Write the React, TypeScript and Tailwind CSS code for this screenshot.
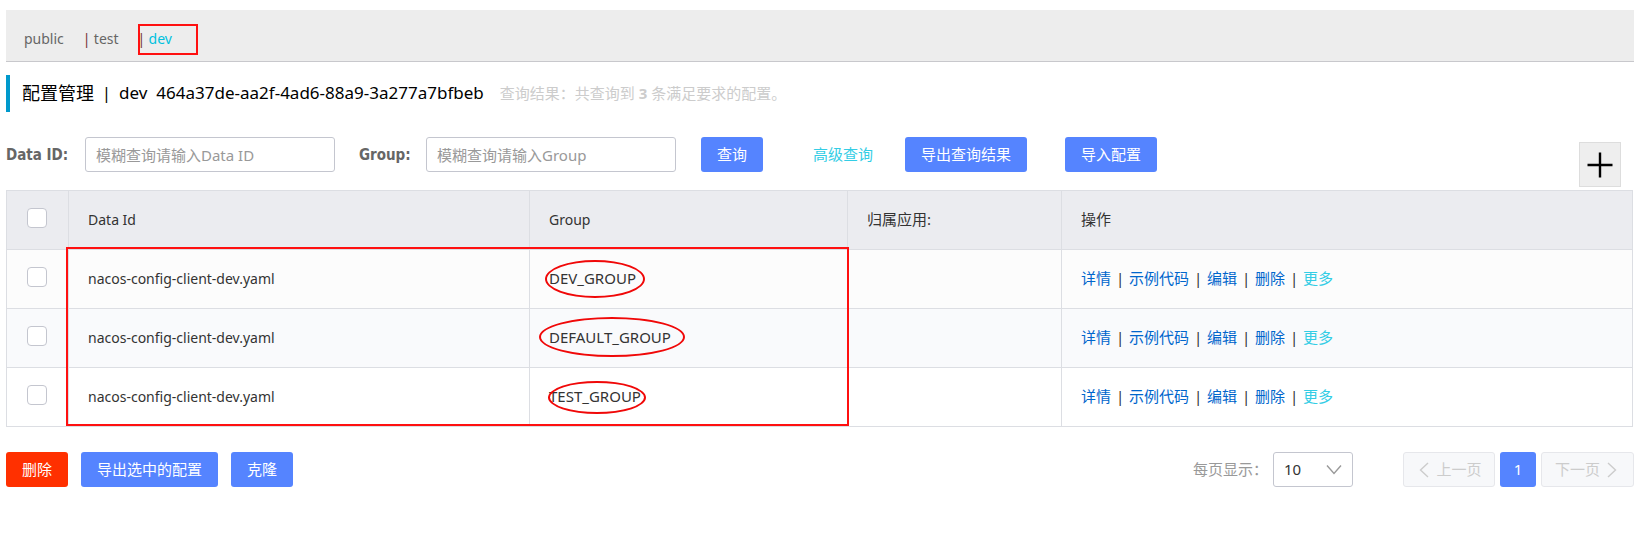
import { ReactNode } from "react";

const namespaces = ["public", "test", "dev"];

const rows = [
  { id: "nacos-config-client-dev.yaml", group: "DEV_GROUP", mark: "-left-1 -top-2 w-[100px] h-[38px]" },
  { id: "nacos-config-client-dev.yaml", group: "DEFAULT_GROUP", mark: "-left-[10px] -top-[10px] w-[146px] h-[40px]" },
  { id: "nacos-config-client-dev.yaml", group: "TEST_GROUP", mark: "-left-px -top-[5px] w-[98px] h-[33px]" },
];

const rowColors = ["bg-[#fcfcfc]", "bg-[#f9fafc]", "bg-white"];

const columns = [
  { name: "Data Id", size: "text-[14px]" },
  { name: "Group", size: "text-[14px]" },
  { name: "归属应用:", size: "pb-0.5 text-[15px]" },
  { name: "操作", size: "pb-0.5 text-[15px]" },
];

function Button({ children, danger = false }: { children: ReactNode; danger?: boolean }) {
  return (
    <button
      type="button"
      className={`h-[35px] shrink-0 rounded-[3px] px-4 pb-0.5 text-white ${danger ? "bg-[#ff3000]" : "bg-[#5584ff]"}`}
    >
      {children}
    </button>
  );
}

function Check({ label }: { label: string }) {
  return (
    <input
      type="checkbox"
      aria-label={label}
      className="mb-1 block size-5 appearance-none rounded-[4px] border border-[#c4c6cf] bg-white checked:bg-[#5584ff]"
    />
  );
}

function Chevron({ d, className }: { d: string; className: string }) {
  return (
    <svg viewBox="0 0 16 16" className={className} fill="none" stroke="currentColor" strokeWidth="1.4" aria-hidden="true">
      <path d={d} />
    </svg>
  );
}

function Actions() {
  return (
    <div className="flex whitespace-pre">
      {["详情", "示例代码", "编辑", "删除"].map((name) => (
        <span key={name} className="flex">
          <a href="#" className="text-[#0066cc]">{name}</a>
          <span className="w-[18px] text-center">|</span>
        </span>
      ))}
      <a href="#" className="text-[#33cde5]">更多</a>
    </div>
  );
}

export default function App() {
  return (
    <main className="bg-white pt-[10px] pr-[7px] pl-[6px] font-['Noto_Sans','Noto_Sans_CJK_SC',sans-serif] text-[15px] leading-5 text-[#333]">
      <nav className="flex h-[52px] items-center border-b border-[#c8c8cc] bg-[#ededed] pt-1.5 pl-[18px] text-[14px] text-[#666]">
        {namespaces.map((name, i) => (
          <span key={name} className="flex">
            {i > 0 && <span className="w-[11px] text-[#733]">|</span>}
            <span className="relative">
              <a href="#" className={name === "dev" ? "text-[#00c1de]" : "mr-[19px]"}>{name}</a>
              {name === "dev" && (
                <span className="pointer-events-none absolute -top-[5px] -left-[11px] h-[31px] w-[60px] border-2 border-[#ff1010]" />
              )}
            </span>
          </span>
        ))}
      </nav>

      <header className="mt-[13px] flex h-[37px] items-center border-l-4 border-[#0099cc] pb-0.5 pl-3">
        <h1 className="flex text-[17px] leading-6 text-black">
          <span className="text-[18px]">配置管理</span>
          <span className="w-[25px] text-center">|</span>
          <span className="mr-[9px]">dev</span>
          <span>464a37de-aa2f-4ad6-88a9-3a277a7bfbeb</span>
        </h1>
        <p className="ml-4 text-[#ccc]">
          查询结果：共查询到 <strong>3</strong> 条满足要求的配置。
        </p>
      </header>

      <form className="mt-[25px] flex h-[53px] items-start" onSubmit={(e) => e.preventDefault()}>
        <label htmlFor="data-id" className="w-[79px] shrink-0 font-['DejaVu_Sans_Condensed','DejaVu_Sans',sans-serif] leading-[37px] font-bold text-[#666]">Data ID:</label>
        <input
          id="data-id"
          placeholder="模糊查询请输入Data ID"
          className="h-[35px] w-[250px] rounded-[3px] border border-[#c4c6cf] px-[10px] placeholder:text-[#999]"
        />
        <label htmlFor="group" className="ml-6 w-[67px] shrink-0 font-['DejaVu_Sans_Condensed','DejaVu_Sans',sans-serif] leading-[37px] font-bold text-[#666]">Group:</label>
        <input
          id="group"
          placeholder="模糊查询请输入Group"
          className="mr-[25px] h-[35px] w-[250px] rounded-[3px] border border-[#c4c6cf] px-[10px] placeholder:text-[#999]"
        />
        <Button>查询</Button>
        <a href="#" className="mr-8 ml-[50px] shrink-0 leading-[34px] text-[#33cde5]">高级查询</a>
        <Button>导出查询结果</Button>
        <div className="w-[38px]" />
        <Button>导入配置</Button>
        <button
          type="button"
          aria-label="新建配置"
          className="mt-[5px] mr-[13px] ml-auto flex h-[45px] w-[42px] items-center justify-center border border-[#ddd] bg-[#eee] text-black"
        >
          <svg viewBox="0 0 26 26" className="size-[26px]" stroke="currentColor" strokeWidth="2.4" aria-hidden="true">
            <path d="M13 .5v25M.5 13h25" />
          </svg>
        </button>
      </form>

      <div className="relative pr-px">
        <table className="w-full table-fixed border-collapse text-left">
          <colgroup>
            <col className="w-[62px]" />
            <col className="w-[461px]" />
            <col className="w-[318px]" />
            <col className="w-[214px]" />
            <col />
          </colgroup>
          <thead>
            <tr className="h-[59px] bg-[#ebecf0]">
              <th className="border border-[#dcdee3] pl-5"><Check label="全选" /></th>
              {columns.map(({ name, size }) => (
                <th key={name} className={`border border-[#dcdee3] pl-[19px] font-normal ${size}`}>{name}</th>
              ))}
            </tr>
          </thead>
          <tbody>
            {rows.map((row, i) => (
              <tr key={row.group} className={`h-[59px] ${rowColors[i]}`}>
                <td className="border border-[#dcdee3] pl-5"><Check label={row.group} /></td>
                <td className="border border-[#dcdee3] pl-[19px] text-[14px]">{row.id}</td>
                <td className="border border-[#dcdee3] pb-0.5 pl-[19px]">
                  <span className="relative">
                    {row.group}
                    <span className={`pointer-events-none absolute rounded-[50%] border-2 border-[#f00808] ${row.mark}`} />
                  </span>
                </td>
                <td className="border border-[#dcdee3] pl-5" />
                <td className="border border-[#dcdee3] pb-0.5 pl-[19px]"><Actions /></td>
              </tr>
            ))}
          </tbody>
        </table>
        <div className="pointer-events-none absolute top-[57px] bottom-px left-[60px] w-[783px] border-2 border-[#ff1010]" />
      </div>

      <footer className="mt-[25px] flex items-center">
        <div className="flex gap-[13px]">
          <Button danger>删除</Button>
          <Button>导出选中的配置</Button>
          <Button>克隆</Button>
        </div>
        <label htmlFor="page-size" className="mr-[5px] ml-auto pb-0.5 text-[#999]">每页显示：</label>
        <div className="relative mr-[50px]">
          <select id="page-size" className="block h-[35px] w-20 appearance-none rounded-[3px] border border-[#c4c6cf] bg-white px-[10px] pb-0.5">
            <option>10</option>
          </select>
          <Chevron d="M1 3.500l7 8 7-8" className="pointer-events-none absolute top-[10px] right-[11px] size-4 text-[#999]" />
        </div>
        <div className="flex gap-[5px]">
          <button type="button" disabled className="flex h-[35px] w-[92px] items-center justify-center gap-1 rounded-[3px] border border-[#e6e7eb] bg-[#f7f8fa] text-[#ccc]">
            <Chevron d="M12 1L4.500 8l7.500 7" className="size-4" />
            <span className="pb-0.5">上一页</span>
          </button>
          <button type="button" className="h-[35px] w-9 rounded-[3px] bg-[#5584ff] pb-0.5 text-white">1</button>
          <button type="button" disabled className="flex h-[35px] w-[93px] items-center justify-center gap-1 rounded-[3px] border border-[#e6e7eb] bg-[#f7f8fa] text-[#ccc]">
            <span className="pb-0.5">下一页</span>
            <Chevron d="M4 1l7.500 7L4 15" className="size-4" />
          </button>
        </div>
      </footer>
    </main>
  );
}
